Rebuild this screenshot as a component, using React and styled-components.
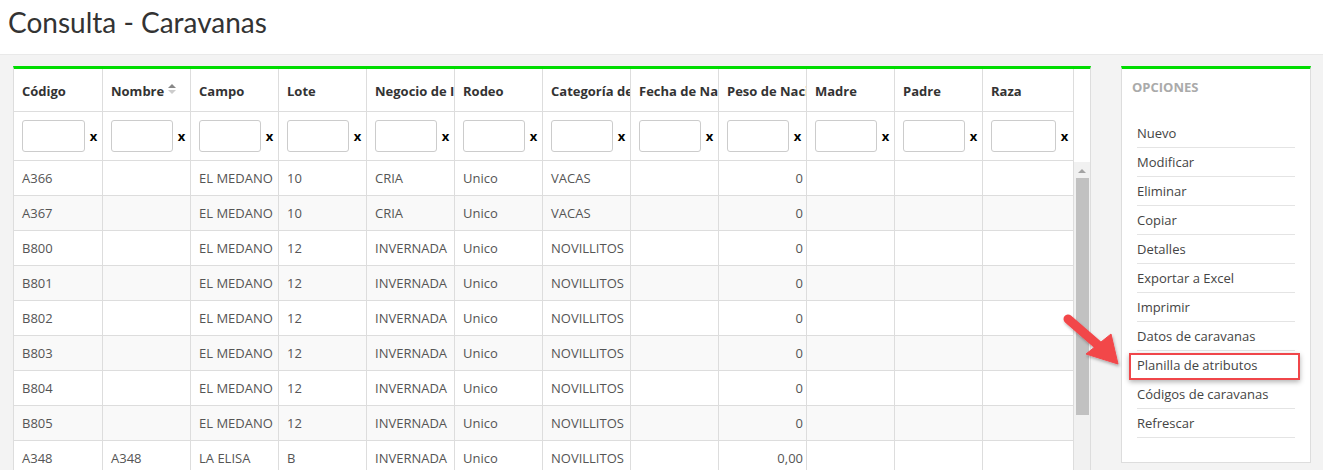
import React from "react";
import styled, { createGlobalStyle } from "styled-components";

const GlobalStyle = createGlobalStyle`
    html, body {
        margin: 0;
        padding: 0;
        height: 470px;
        overflow: hidden;
        background: #f3f3f3;
        font-family: "Open Sans", "Liberation Sans", sans-serif;
    }
`;

const columns = [
    { key: "codigo", label: "Código", width: 89 },
    { key: "nombre", label: "Nombre", width: 88, sort: true },
    { key: "campo", label: "Campo", width: 88 },
    { key: "lote", label: "Lote", width: 88 },
    { key: "negocio", label: "Negocio de Invernada", width: 88 },
    { key: "rodeo", label: "Rodeo", width: 88 },
    { key: "categoria", label: "Categoría de animal", width: 88 },
    { key: "fecha", label: "Fecha de Nacimiento", width: 88 },
    { key: "peso", label: "Peso de Nacimiento", width: 88, right: true },
    { key: "madre", label: "Madre", width: 88 },
    { key: "padre", label: "Padre", width: 88 },
    { key: "raza", label: "Raza", width: 91 },
];

const template = columns.map((c) => `${c.width}px`).join(" ");

const medano = (codigo, lote, negocio, categoria) => ({
    codigo, nombre: "", campo: "EL MEDANO", lote, negocio, rodeo: "Unico", categoria, fecha: "", peso: "0", madre: "", padre: "", raza: "",
});

const rows = [
    medano("A366", "10", "CRIA", "VACAS"),
    medano("A367", "10", "CRIA", "VACAS"),
    medano("B800", "12", "INVERNADA", "NOVILLITOS"),
    medano("B801", "12", "INVERNADA", "NOVILLITOS"),
    medano("B802", "12", "INVERNADA", "NOVILLITOS"),
    medano("B803", "12", "INVERNADA", "NOVILLITOS"),
    medano("B804", "12", "INVERNADA", "NOVILLITOS"),
    medano("B805", "12", "INVERNADA", "NOVILLITOS"),
    { codigo: "A348", nombre: "A348", campo: "LA ELISA", lote: "B", negocio: "INVERNADA", rodeo: "Unico", categoria: "NOVILLITOS", fecha: "", peso: "0,00", madre: "", padre: "", raza: "" },
    { codigo: "A349", nombre: "A349", campo: "LA ELISA", lote: "B", negocio: "INVERNADA", rodeo: "Unico", categoria: "NOVILLITOS", fecha: "", peso: "0,00", madre: "", padre: "", raza: "" },
];

const opciones = [
    "Nuevo",
    "Modificar",
    "Eliminar",
    "Copiar",
    "Detalles",
    "Exportar a Excel",
    "Imprimir",
    "Datos de caravanas",
    "Planilla de atributos",
    "Códigos de caravanas",
    "Refrescar",
];

export default function App() {
    return (
        <>
            <GlobalStyle />
            <TitleBar>
                <Title>Consulta - Caravanas</Title>
            </TitleBar>
            <Content>
                <TablePanel>
                    <HeadArea>
                        <GridRow>
                            {columns.map((c) => (
                                <HeadCell key={c.key}>
                                    <HeadLabel>{c.label}</HeadLabel>
                                    {c.sort && <SortIcon />}
                                </HeadCell>
                            ))}
                        </GridRow>
                        <GridRow>
                            {columns.map((c) => (
                                <FilterCell key={c.key}>
                                    <FilterInput />
                                    <Clear>x</Clear>
                                </FilterCell>
                            ))}
                        </GridRow>
                    </HeadArea>
                    <BodyArea>
                        <Rows>
                            {rows.map((r, i) => (
                                <GridRow key={i} $striped={i % 2 === 1}>
                                    {columns.map((c) => (
                                        <DataCell key={c.key} $right={c.right}>{r[c.key]}</DataCell>
                                    ))}
                                </GridRow>
                            ))}
                        </Rows>
                        <Scrollbar>
                            <ScrollArrow />
                            <ScrollThumb />
                        </Scrollbar>
                    </BodyArea>
                </TablePanel>
                <OptionsPanel>
                    <OptionsTitle>OPCIONES</OptionsTitle>
                    <OptionsList>
                        {opciones.map((o) => (
                            <OptionItem key={o} $marked={o === "Planilla de atributos"}>{o}</OptionItem>
                        ))}
                    </OptionsList>
                </OptionsPanel>
                <Arrow />
            </Content>
        </>
    );
}

function SortIcon() {
    return (
        <SortSvg width="8" height="12" viewBox="0 0 8 12">
            <path d="M0 5 L4 1 L8 5 Z" fill="#888" />
            <path d="M0 7 L4 11 L8 7 Z" fill="#ccc" />
        </SortSvg>
    );
}

function Arrow() {
    return (
        <ArrowSvg width="80" height="75" viewBox="0 0 80 75">
            <defs>
                <filter id="sh" x="-20%" y="-20%" width="140%" height="140%">
                    <feDropShadow dx="1" dy="2" stdDeviation="1.5" floodColor="#000" floodOpacity="0.3" />
                </filter>
            </defs>
            <g filter="url(#sh)" fill="#f2464a" stroke="#f2464a">
                <line x1="14" y1="13" x2="44" y2="39" strokeWidth="9" strokeLinecap="round" />
                <path d="M64 58 L32 48 L57 28 Z" strokeWidth="1" strokeLinejoin="round" />
            </g>
        </ArrowSvg>
    );
}

const TitleBar = styled.div`
    height: 54px;
    background: #fff;
    border-bottom: 1px solid #e9e9e9;
    padding-left: 8px;
    display: flex;
    align-items: center;
`;

const Title = styled.h1`
    margin: 0;
    margin-top: -10px;
    font-family: Lato, "Open Sans", sans-serif;
    font-weight: 400;
    font-size: 28px;
    color: #333;
`;

const Content = styled.div`
    position: relative;
    display: flex;
    align-items: flex-start;
    gap: 30px;
    padding: 11px 0 0 13px;
`;

const TablePanel = styled.div`
    background: #fff;
    border: 1px solid #ddd;
    border-top: 3px solid #00dd00;
    display: flex;
    flex-direction: column;
    width: 1076px;
`;

const HeadArea = styled.div`
    display: flex;
    flex-direction: column;
`;

const GridRow = styled.div`
    display: grid;
    grid-template-columns: ${template};
    background: ${(p) => (p.$striped ? "#f9f9f9" : "#fff")};
`;

const HeadCell = styled.div`
    box-sizing: border-box;
    height: 43px;
    display: flex;
    align-items: center;
    gap: 4px;
    padding: 2px 0 0 8px;
    border-right: 1px solid #ddd;
    border-bottom: 1px solid #ddd;
    overflow: hidden;
    font-weight: 700;
    font-size: 13px;
    color: #333;
`;

const HeadLabel = styled.span`
    white-space: nowrap;
`;

const SortSvg = styled.svg`
    flex: none;
    margin-top: -4px;
`;

const FilterCell = styled.div`
    height: 48px;
    display: flex;
    align-items: center;
    padding-left: 8px;
    border-right: 1px solid #ddd;
    border-bottom: 1px solid #ddd;
`;

const FilterInput = styled.input`
    flex: 1;
    min-width: 0;
    height: 32px;
    box-sizing: border-box;
    border: 1px solid #ccc;
    border-radius: 3px;
    background: #fff;
`;

const Clear = styled.span`
    width: 17px;
    text-align: center;
    font-weight: 700;
    font-size: 13px;
    color: #000;
`;

const BodyArea = styled.div`
    display: flex;
`;

const Rows = styled.div`
    display: flex;
    flex-direction: column;
`;

const DataCell = styled.div`
    height: 34px;
    display: flex;
    align-items: center;
    justify-content: ${(p) => (p.$right ? "flex-end" : "flex-start")};
    padding: ${(p) => (p.$right ? "0 3px 0 0" : "0 0 0 8px")};
    border-right: 1px solid #ddd;
    border-bottom: 1px solid #ddd;
    white-space: nowrap;
    overflow: hidden;
    font-size: 13px;
    color: #555;
`;

const Scrollbar = styled.div`
    width: 16px;
    margin-top: 1px;
    background: #f1f1f1;
    display: flex;
    flex-direction: column;
    align-items: center;
`;

const ScrollArrow = styled.div`
    margin-top: 7px;
    width: 0;
    height: 0;
    border-left: 4px solid transparent;
    border-right: 4px solid transparent;
    border-bottom: 4px solid #a3a3a3;
`;

const ScrollThumb = styled.div`
    margin-top: 5px;
    width: 13px;
    height: 237px;
    background: #c1c1c1;
`;

const OptionsPanel = styled.div`
    width: 173px;
    background: #fff;
    border: 1px solid #ddd;
    border-top: 3px solid #00dd00;
    padding: 0 15px 24px 0;
    box-sizing: content-box;
`;

const OptionsTitle = styled.div`
    padding: 9px 0 0 10px;
    height: 41px;
    font-weight: 700;
    font-size: 13px;
    color: #aaa;
`;

const OptionsList = styled.ul`
    list-style: none;
    margin: 0;
    padding: 0 0 0 15px;
`;

const OptionItem = styled.li`
    position: relative;
    padding: 5px 0;
    line-height: 18px;
    font-size: 13px;
    color: #444;
    border-bottom: 1px solid #e4e4e4;

    &::after {
        content: "";
        display: ${(p) => (p.$marked ? "block" : "none")};
        position: absolute;
        left: -8px;
        right: -5px;
        top: 2px;
        bottom: -1px;
        border: 2px solid #f0464a;
        box-shadow: 0 2px 5px rgba(0, 0, 0, 0.3);
    }
`;

const ArrowSvg = styled.svg`
    position: absolute;
    left: 1054px;
    top: 251px;
`;
